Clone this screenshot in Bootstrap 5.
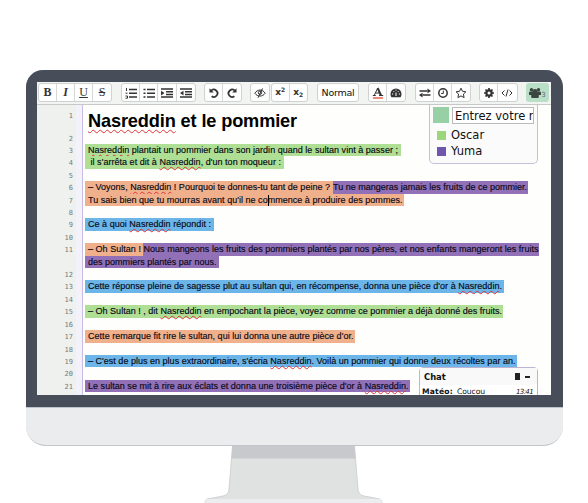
<!DOCTYPE html>
<html lang="fr">
<head>
<meta charset="utf-8">
<title>Nasreddin et le pommier</title>
<link href="https://cdn.jsdelivr.net/npm/bootstrap@5.3.0/dist/css/bootstrap.min.css" rel="stylesheet">
<style>
body{background:#fff;width:588px;height:503px;overflow:hidden;padding:70px 0 0 26px;font-family:"Liberation Sans",Arial,sans-serif}
.monitor{width:537px;height:376px;background:#ebecee;border-radius:17px 17px 20px 20px;border-bottom:1px solid #c3c5c9;overflow:hidden}
.bezel{height:338px;background:#474e5a;padding:12px 12px 12px 11px;border-bottom:1px solid #bfc2c9}
.screen{height:313px;background:#fefefc;overflow:hidden}
.tools{height:23px;background:#f2f4f2;border-bottom:1px solid #c6c9c6;padding:1px 0 0 1px}
.grp{height:19px;background:#fdfefd;border:1px solid #cfd2d0;border-radius:3px}
.g-font{width:74px}
.g-list{width:75px;margin-left:9px}
.g-hist{width:38px;margin-left:8px}
.g-eye{width:20px;margin-left:8px}
.g-script{width:37px;margin-left:1px}
.g-color{width:38px;margin-left:9px}
.g-time{width:56px;margin-left:9px}
.g-conf{width:39px;margin-left:8px}
.tool{width:18.2px;font:bold 12px/17px "Liberation Serif",serif;color:#333;border-right:1px solid #d6d8d6}
.tool:last-child{border-right:0}
.tool svg{width:12px;height:12px;fill:none;stroke:#333;stroke-width:1.5}
.tool svg.thin{stroke-width:1}
.tool .solid{fill:#333;stroke:none}
.sm-txt{font:bold 9px/17px "DejaVu Sans",sans-serif}
.sm-txt sup,.sm-txt sub{font-size:6px}
.style-pick{width:42px;margin-left:9px;font:9.5px/18px "DejaVu Sans",sans-serif;color:#111}
.users{width:23px;height:19px;margin-left:8px;background:#b9dfc6;border-radius:3px;font:7px/20px "DejaVu Sans",sans-serif;color:#567}
.line{height:12.42px}
.line.head{height:26.6px}
.no{width:39px;padding-right:3px;background:#eef1ee;font:7px/14px "DejaVu Sans Mono",monospace;color:#777}
.head .no{line-height:22px}
.rule{width:7px;background:#f3f1fa;border-right:1px solid #c9bde6;margin-right:2px}
.seg{height:12.42px;font-size:9px;line-height:12.4px;color:#090914;white-space:pre;padding-left:3px;-webkit-text-stroke:.15px #090914}
.seg.join{padding-left:.5px}
.g{background:#aedf95}.o{background:#f0b08c}.p{background:#9270b8}.b{background:#6bb5e9}
.title-txt{font-size:18.2px;font-weight:700;line-height:33px;color:#000;white-space:pre;padding-left:3px}
u{text-decoration:underline wavy #e0343a .7px;text-underline-offset:.5px;text-decoration-skip-ink:none}
.title-txt u{text-decoration-thickness:1px;text-underline-offset:1.5px}
.caret{width:1px;height:11px;left:230.5px;top:1px;background:#000}
.people{left:392px;top:22px;width:109px;height:60px;background:#fafbfa;border:1px solid #c5bfd8;border-top-color:#c6c9c6;border-radius:0 0 5px 5px;font:11.5px/16px "DejaVu Sans",sans-serif;color:#111;padding:2px 3px}
.me{width:16px;height:16px;margin-right:3px;background:#98d0a6}
.name-in{width:82px;height:17px;border:1px solid #bbb;background:#fff;padding-left:2px;white-space:nowrap;overflow:hidden;line-height:16px}
.person{margin-top:3px}
.person + .person{margin-top:0}
.dot{width:9px;height:9px;margin:0 5px 0 4px}
.dot-g{background:#9bd67d}.dot-p{background:#7057ae}
.chat{left:382px;top:285px;width:119px;height:40px;background:#fff;border:1px solid #beb3d4;border-radius:4px 4px 0 0;font:7.6px/10px "DejaVu Sans",sans-serif;color:#111}
.chat-h{height:17px;background:#f8f9f8;padding:0 7px 0 4px;font-size:8.4px}
.sq{width:5px;height:7px;background:#222;margin-right:5px}
.mn{width:5px;height:2px;background:#222}
.msg{padding:2px 4px 0 2px}
.msg i{font-size:7px}
.stand{display:block;margin-left:178px}
</style>
<script src="https://cdn.jsdelivr.net/npm/bootstrap@5.3.0/dist/js/bootstrap.bundle.min.js"></script>
</head>
<body>
<div class="monitor">
 <div class="bezel">
  <div class="screen position-relative">
   <div class="tools d-flex">
    <div class="grp g-font d-flex">
     <div class="tool text-center">B</div><div class="tool text-center fst-italic">I</div><div class="tool text-center fw-normal text-decoration-underline">U</div><div class="tool text-center fw-normal text-decoration-line-through">S</div>
    </div>
    <div class="grp g-list d-flex">
     <div class="tool text-center"><svg viewBox="0 0 12 12"><path d="M4 2.5h8M4 6.2h8M4 10h8"/><path d="M1.5 1v3M.5 6.2h2M.5 9h2v2.2h-2" stroke-width="1"/></svg></div>
     <div class="tool text-center"><svg viewBox="0 0 12 12"><path d="M4 2.5h8M4 6.2h8M4 10h8M.5 2.5h2M.5 6.2h2M.5 10h2"/></svg></div>
     <div class="tool text-center"><svg viewBox="0 0 12 12"><path d="M0 2h12M5 4.7h7M5 7.4h7M0 10.1h12"/><path class="solid" d="M0 3.7 3.5 6 0 8.4z"/></svg></div>
     <div class="tool text-center"><svg viewBox="0 0 12 12"><path d="M0 2h12M5 4.7h7M5 7.4h7M0 10.1h12"/><path class="solid" d="M3.5 3.7 0 6l3.500 2.400z"/></svg></div>
    </div>
    <div class="grp g-hist d-flex">
     <div class="tool text-center"><svg viewBox="0 0 12 12"><path d="M3 3.8A3.7 3.7 0 1 1 3.6 9.3" stroke-width="1.8"/><path class="solid" d="M1.5 1.2v4.3h4.3z"/></svg></div>
     <div class="tool text-center"><svg viewBox="0 0 12 12"><path d="M9 3.8A3.7 3.7 0 1 0 8.4 9.3" stroke-width="1.8"/><path class="solid" d="M10.5 1.2v4.3H6.2z"/></svg></div>
    </div>
    <div class="grp g-eye d-flex">
     <div class="tool text-center"><svg class="thin" viewBox="0 0 12 12"><path d="M.8 6.2C3.5 2 8.5 2 11.2 6.2 8.5 10 3.5 10 .8 6.2zM8.5 1.5 4 10.8"/><circle cx="6" cy="5.7" r="1.7"/></svg></div>
    </div>
    <div class="grp g-script d-flex">
     <div class="tool text-center sm-txt">x<sup>2</sup></div><div class="tool text-center sm-txt">x<sub>2</sub></div>
    </div>
    <div class="grp style-pick text-center"><span data-w="33">Normal</span></div>
    <div class="grp g-color d-flex">
     <div class="tool text-center"><svg viewBox="0 0 12 12"><path d="M2.300 8.300 5.600 1.200M3.500 6h4.500M.8 8.500h3M7 8.500h4.200" stroke-width="1"/><path d="M5.700 1 9 8.500" stroke-width="2"/><path d="M1 11h10" stroke="#e8604f"/></svg></div>
     <div class="tool text-center"><svg viewBox="0 0 12 12"><path class="solid" d="M.5 7a5.500 5.500 0 0 1 11 0q0 2-.9 3.300H1.400Q.5 9 .5 7z"/><path d="M2 7h1.200M3.300 4l.8.8M6 2.500v1M8.700 4l-.8.8M8.800 7H10M6 9V5.500" stroke="#fff" stroke-width="1"/></svg></div>
    </div>
    <div class="grp g-time d-flex">
     <div class="tool text-center"><svg viewBox="0 0 12 12"><path d="M.5 4h8M3.500 8h8"/><path class="solid" d="M8.500 1.500 12 4 8.500 6.200zM3.500 5.800 0 8l3.500 2.500z"/></svg></div>
     <div class="tool text-center"><svg viewBox="0 0 12 12"><circle cx="6" cy="6" r="4.200"/><path d="M6.300 3.500v3H4.200" stroke-width="1"/></svg></div>
     <div class="tool text-center"><svg class="thin" viewBox="0 0 12 12"><path d="m6 1.200 1.500 3.100 3.400.5-2.500 2.300.7 3.500L6 8.900l-3.100 1.700.7-3.500L1.100 4.800l3.400-.5z"/></svg></div>
    </div>
    <div class="grp g-conf d-flex">
     <div class="tool text-center"><svg viewBox="0 0 12 12"><circle cx="6" cy="6" r="2.600" stroke-width="2.200"/><path d="M6 1v2M6 9v2M1 6h2M9 6h2M2.500 2.500l1.400 1.400M8.100 8.100l1.400 1.400M9.500 2.500 8.100 3.900M3.900 8.100 2.500 9.500" stroke-width="1.700"/></svg></div>
     <div class="tool text-center"><svg class="thin" viewBox="0 0 12 12"><path d="M3.500 3.500 1 6l2.500 2.500M8.500 3.500 11 6 8.500 8.500M7 2.500l-2 7"/></svg></div>
    </div>
    <div class="users d-flex justify-content-center align-items-center">
     <svg width="12" height="12" viewBox="0 0 12 12" fill="#3c4640"><circle cx="2.500" cy="2.800" r="1.700"/><circle cx="9.500" cy="2.800" r="1.700"/><circle cx="6" cy="4.200" r="2.300"/><path d="M0 8V5.500Q0 4.500 1.500 4.600h9q1.500 0 1.500.9V8H9.800v2q0 1-1 1H3.200q-1 0-1-1V8z"/></svg><span class="pt-1">3</span>
    </div>
   </div>
   <div id="pad"></div>
   <div class="people position-absolute">
    <div class="d-flex"><div class="me"></div><div class="name-in">Entrez votre nom</div></div>
    <div class="person d-flex align-items-center"><span class="dot dot-g"></span>Oscar</div>
    <div class="person d-flex align-items-center"><span class="dot dot-p"></span>Yuma</div>
   </div>
   <div class="chat position-absolute">
    <div class="chat-h d-flex align-items-center"><b class="me-auto">Chat</b><span class="sq"></span><span class="mn"></span></div>
    <div class="msg d-flex"><b data-w="31">Matéo:</b><span class="ms-1 me-auto" data-w="28">Coucou</span><i data-w="17">13:41</i></div>
   </div>
  </div>
 </div>
</div>
<svg class="stand" width="180" height="57" viewBox="0 0 180 57">
 <path d="M28.500 0H150.500L154 43Q154.500 49 160 50L176 53Q178 54 178 57H1Q1 54 3 53L19 50Q24.500 49 25 43Z" fill="#e0e2e2" stroke="#c8cacb" stroke-width=".8"/>
 <path d="M28.500 0H150.500L151.500 12.500H27.500Z" fill="#c8c9cc"/>
 <path d="M1 57Q1 54 3 53H176Q178 54 178 57Z" fill="#ecedee"/>
</svg>
<script>
// Each line: [number, [[colour, highlight width, text width, html], ...], has caret]
const lines = [
 ['2',[]],
 ['3',[['g',316,310,'<u>Nasreddin</u> plantait un pommier dans son jardin quand le sultan vint à passer ;']]],
 ['4',[['g',199,193,' il s\'arrêta et dit à <u>Nasreddin</u>, d\'un ton moqueur :']]],
 ['5',[]],
 ['6',[['o',247.5,242,'– Voyons, <u>Nasreddin</u> ! Pourquoi te donnes-tu tant de peine ?'],['p join',195.5,194,'Tu ne mangeras jamais les fruits de ce pommier.']]],
 ['7',[['o',319,314.5,'Tu sais bien que tu mourras avant qu\'il ne commence à produire des pommes.']],true],
 ['8',[]],
 ['9',[['b',129,123,'Ce à quoi <u>Nasreddin</u> répondit :']]],
 ['10',[]],
 ['11',[['o',58,53,'– Oh Sultan !'],['p join',396,395,'Nous mangeons les fruits des pommiers plantés par nos pères, et nos enfants mangeront les fruits']]],
 ['',[['p',133.5,128.5,'des pommiers plantés par nous.']]],
 ['12',[]],
 ['13',[['b',419,414,'Cette réponse pleine de sagesse plut au sultan qui, en récompense, donna une pièce d\'or à <u>Nasreddin</u>.']]],
 ['14',[]],
 ['15',[['g',418,414,'– Oh Sultan ! , dit <u>Nasreddin</u> en empochant la pièce, voyez comme ce pommier a déjà donné des fruits.']]],
 ['16',[]],
 ['17',[['o',270,265.5,'Cette remarque fit rire le sultan, qui lui donna une autre pièce d\'or.']]],
 ['18',[]],
 ['19',[['b',432,427.5,'– C\'est de plus en plus extraordinaire, s\'écria <u>Nasreddin</u>. Voilà un pommier qui donne deux récoltes par an.']]],
 ['20',[]],
 ['21',[['p',325,320.5,'Le sultan se mit à rire aux éclats et donna une troisième pièce d\'or à <u>Nasreddin</u>.']]],
 ['',[]]
];
const row = (no, body, cls) => `<div class="line d-flex position-relative ${cls}"><div class="no text-end">${no}</div><div class="rule"></div>${body}</div>`;
document.getElementById('pad').innerHTML =
 row('1','<div class="title-txt"><span data-w="209"><u>Nasreddin</u> et le pommier</span></div>','head') +
 lines.map(([n,segs,caret]) => row(n, segs.map(([c,w,t,h]) => `<div class="seg ${c}" style="width:${w}px"><span data-w="${t}">${h}</span></div>`).join('') + (caret ? '<span class="caret position-absolute"></span>' : ''), '')).join('');
// Spread the letters so each run fills its measure
document.querySelectorAll('[data-w]').forEach(e => {
 const d = e.dataset.w - e.getBoundingClientRect().width;
 e.style.letterSpacing = d / e.textContent.length + 'px';
});
</script>
</body>
</html>
